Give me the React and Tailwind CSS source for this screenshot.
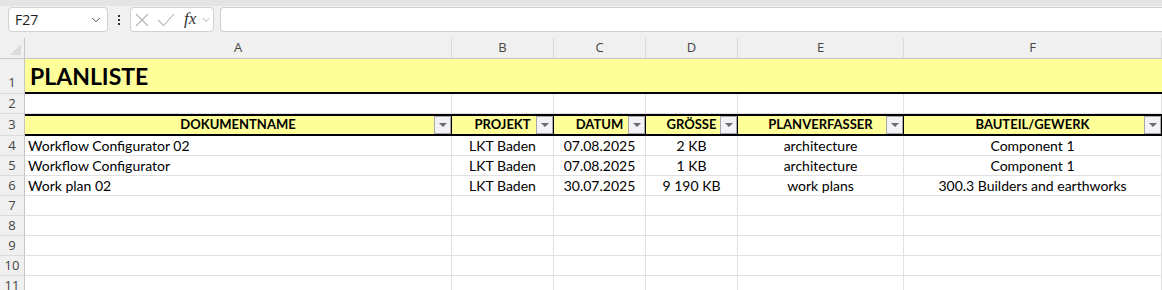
import { ChevronDown } from "lucide-react";

const cols = [
    { key: "A", w: "w-[427px]" },
    { key: "B", w: "w-[102px]" },
    { key: "C", w: "w-[92px]" },
    { key: "D", w: "w-[92px]" },
    { key: "E", w: "w-[166px]" },
    { key: "F", w: "w-[258px]" },
];

const headers = ["DOKUMENTNAME", "PROJEKT", "DATUM", "GRÖSSE", "PLANVERFASSER", "BAUTEIL/GEWERK"];

const rows = [
    ["Workflow Configurator 02", "LKT Baden", "07.08.2025", "2 KB", "architecture", "Component 1"],
    ["Workflow Configurator", "LKT Baden", "07.08.2025", "1 KB", "architecture", "Component 1"],
    ["Work plan 02", "LKT Baden", "30.07.2025", "9 190 KB", "work plans", "300.3 Builders and earthworks"],
];

const RowNum = ({ n, h, end }) => (
    <div className={`w-[25px] shrink-0 ${h} bg-[#f0f0f0] border-r border-b border-r-[#c6c6c6] border-b-[#dadada] flex ${end ? "items-end pb-[1px]" : "items-center"} justify-center text-[13px] text-[#444] font-['Open_Sans']`}>
        {n}
    </div>
);

const FilterBtn = () => (
    <div className="absolute right-0 top-0 bottom-0 w-[17px] bg-[#f2f2f6] border border-[#a9a9a9] flex items-center justify-center">
        <div className="w-0 h-0 border-l-[4px] border-r-[4px] border-t-[4px] border-l-transparent border-r-transparent border-t-[#6b6b6b]" />
    </div>
);

const App = () => {
    return (
        <div className="w-[1162px] h-[290px] overflow-hidden bg-white font-['Lato'] text-black">
            {/* formula bar */}
            <div className="h-[38px] bg-[#f0f0f0] border-t-[6px] border-t-[#e4e4e4] flex items-start pt-[1px] pl-[8px] gap-[6px]">
                <div className="w-[100px] h-[25px] bg-white border border-[#d1d1d1] rounded-[4px] flex items-center justify-between pl-[6px] pr-[4px]">
                    <span className="text-[14px] text-[#222] font-['Open_Sans']">F27</span>
                    <ChevronDown size={14} strokeWidth={1.6} className="text-[#444]" />
                </div>
                <div className="w-[10px] h-[25px] flex flex-col items-center justify-center gap-[2px]">
                    <div className="w-[2px] h-[2px] bg-[#333]" />
                    <div className="w-[2px] h-[2px] bg-[#333]" />
                    <div className="w-[2px] h-[2px] bg-[#333]" />
                </div>
                <div className="w-[84px] h-[25px] bg-white border border-[#d1d1d1] rounded-[4px] flex items-center pl-[4px]">
                    <svg width="14" height="14" viewBox="0 0 14 14" className="text-[#b5b5b5]">
                        <path d="M1 1 L13 13 M13 1 L1 13" stroke="currentColor" strokeWidth="1.1" fill="none" />
                    </svg>
                    <svg width="18" height="14" viewBox="0 0 18 14" className="ml-[8px] text-[#b5b5b5]">
                        <path d="M1 7 L6.5 12.5 L17 1" stroke="currentColor" strokeWidth="1.1" fill="none" />
                    </svg>
                    <span className="ml-[9px] text-[17px] italic text-[#333] font-['Liberation_Serif'] leading-none -mt-[2px]">fx</span>
                    <ChevronDown size={12} strokeWidth={1.4} className="text-[#888] ml-[4px]" />
                </div>
                <div className="flex-1 h-[25px] bg-white border border-r-0 border-[#cfcfcf] rounded-l-[4px]" />
            </div>

            {/* column header */}
            <div className="flex h-[21px] bg-[#f0f0f0] border-b border-[#c6c6c6]">
                <div className="w-[25px] shrink-0 border-r border-[#c6c6c6] relative">
                    <div className="absolute right-[3px] bottom-[3px] w-0 h-0 border-l-[11px] border-t-[11px] border-l-transparent border-t-transparent border-r-[11px] border-r-[#dcdcdc]" />
                </div>
                {cols.map((c) => (
                    <div key={c.key} className={`${c.w} shrink-0 border-r border-[#dadada] flex items-center justify-center text-[13px] text-[#444] font-['Open_Sans']`}>
                        {c.key}
                    </div>
                ))}
            </div>

            {/* row 1 */}
            <div className="flex">
                <RowNum n={1} h="h-[35px]" end />
                <div className="flex-1 h-[35px] bg-[#ffff99] border-b-2 border-black flex items-end pl-[5px] pb-[1px]">
                    <span className="text-[23px] font-bold leading-[30px]">PLANLISTE</span>
                </div>
            </div>

            {/* row 2 */}
            <div className="flex">
                <RowNum n={2} h="h-[20px]" />
                {cols.map((c) => (
                    <div key={c.key} className={`${c.w} shrink-0 h-[20px] border-r border-b border-[#e1e1e1]`} />
                ))}
            </div>

            {/* row 3 */}
            <div className="flex">
                <RowNum n={3} h="h-[22px]" />
                {cols.map((c, i) => (
                    <div key={c.key} className={`${c.w} shrink-0 h-[22px] bg-[#ffff99] border-y-2 border-r border-black relative flex items-center justify-center`}>
                        <span className="text-[13px] font-bold">{headers[i]}</span>
                        <FilterBtn />
                    </div>
                ))}
            </div>

            {/* data rows */}
            {rows.map((r, ri) => (
                <div key={ri} className="flex">
                    <RowNum n={ri + 4} h="h-[20px]" />
                    {cols.map((c, i) => (
                        <div key={c.key} className={`${c.w} shrink-0 h-[20px] border-r border-b border-[#e1e1e1] flex items-center text-[14px] ${i === 0 ? "justify-start pl-[3px]" : "justify-center"}`}>
                            {r[i]}
                        </div>
                    ))}
                </div>
            ))}

            {[7, 8, 9, 10, 11].map((n) => (
                <div key={n} className="flex">
                    <RowNum n={n} h="h-[20px]" />
                    {cols.map((c) => (
                        <div key={c.key} className={`${c.w} shrink-0 h-[20px] border-r border-b border-[#e1e1e1]`} />
                    ))}
                </div>
            ))}
        </div>
    );
};

export default App;
